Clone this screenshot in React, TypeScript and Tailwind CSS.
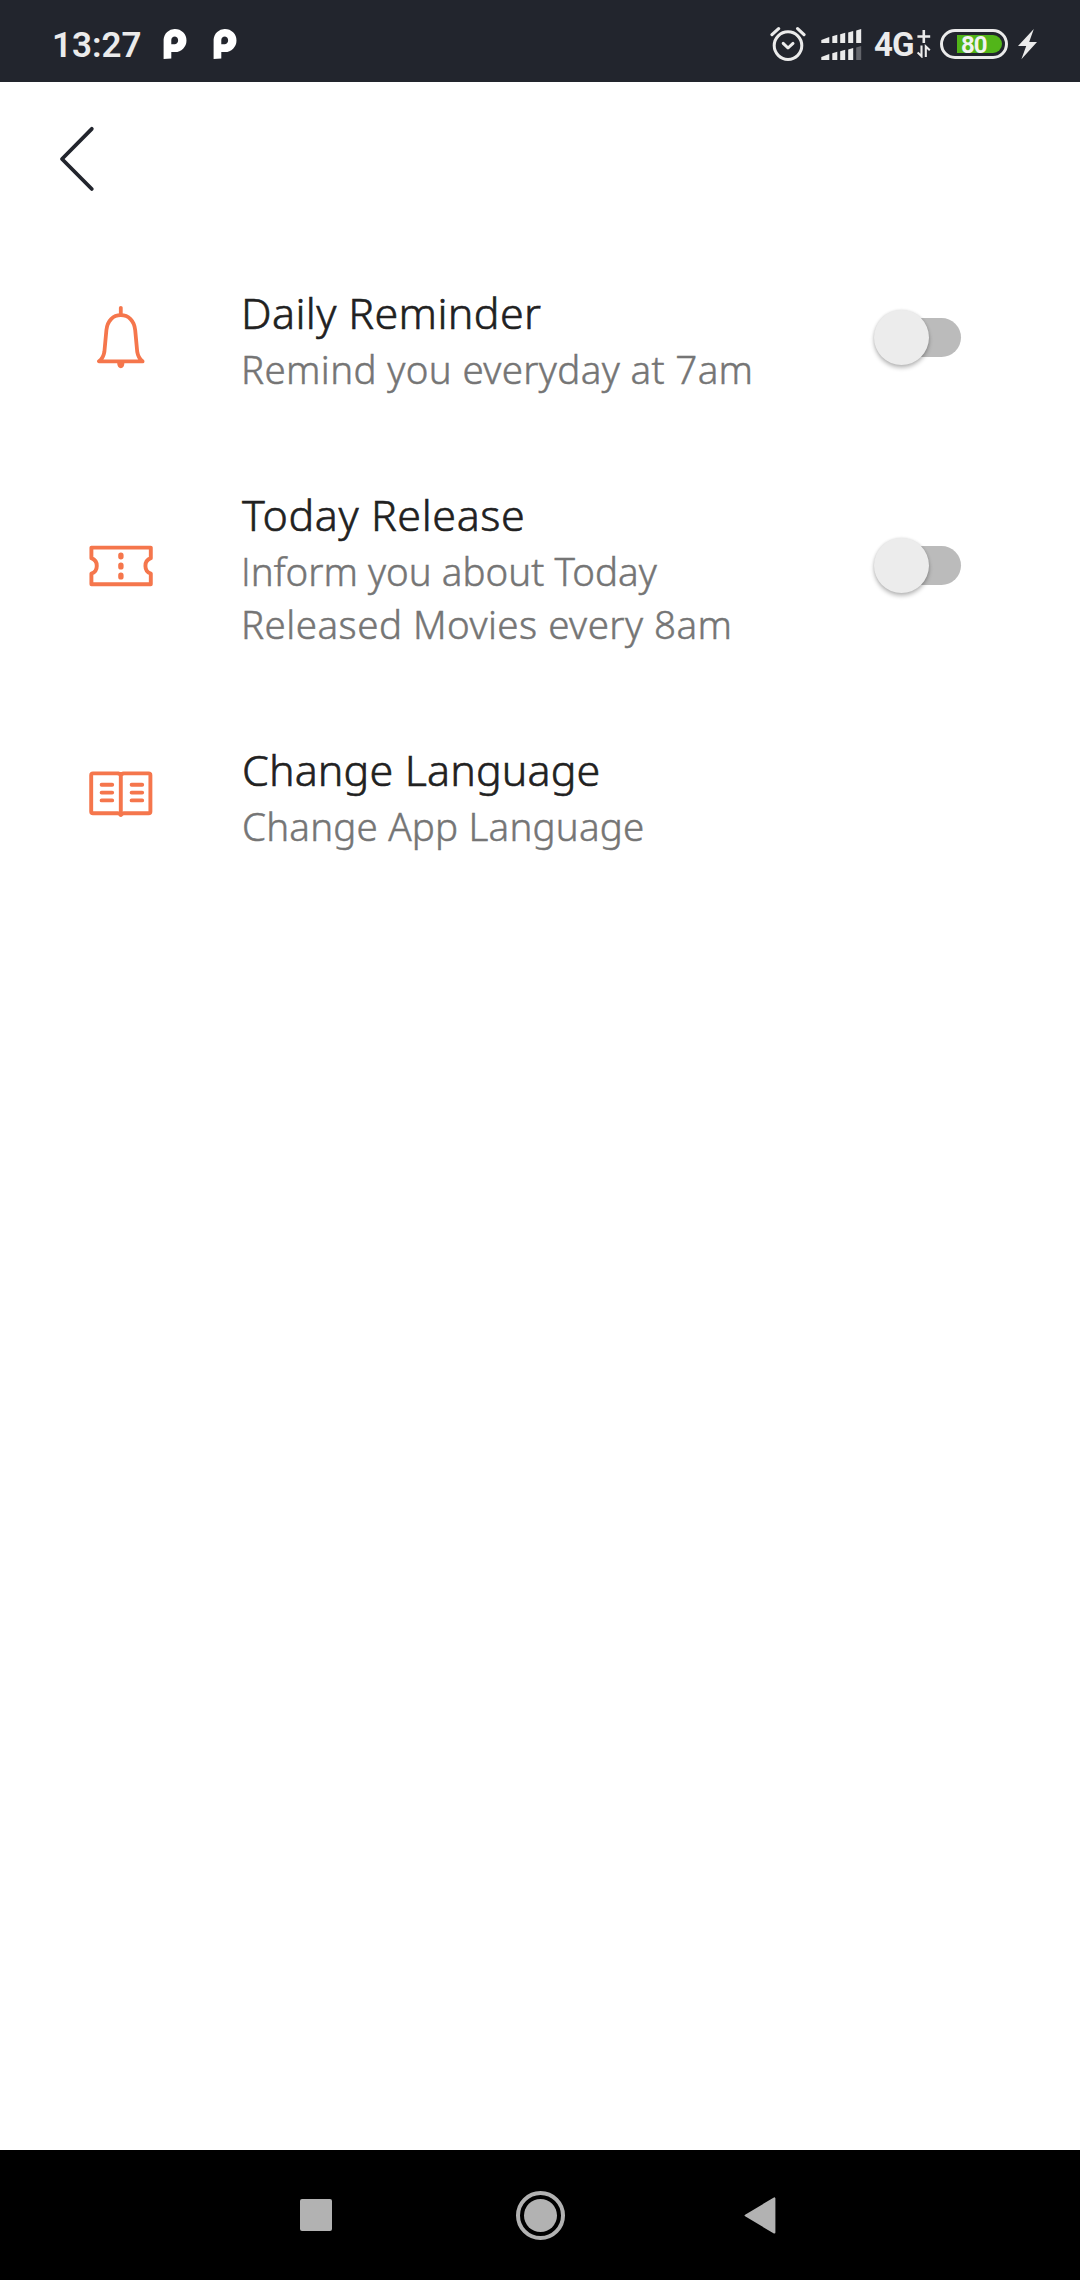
import { useState, type ReactNode } from "react";

const ORANGE = "#f5764c";

function PocketIcon() {
  return (
    <svg width="24" height="30" viewBox="0 0 24 30" fill="none">
      <path
        fillRule="evenodd"
        d="M0.6 30V10.5A11.2 11.2 0 0 1 12 0A11.4 11.4 0 0 1 12 23H8.3V29.4ZM8.3 15.2H12A4 4 0 0 0 12 7.4A3.8 3.8 0 0 0 8.3 11Z"
        fill="#fff"
      />
    </svg>
  );
}

function AlarmIcon() {
  return (
    <svg width="36" height="36" viewBox="0 0 36 36" fill="none" stroke="#ebebeb" strokeLinecap="round">
      <circle cx="18" cy="19.6" r="13.8" strokeWidth="3" />
      <path d="M13.2 17.4L18 22L23 17.4" strokeWidth="3" strokeLinejoin="round" />
      <path d="M2 8.6L8.6 2.6M27.6 2.6L34 8.6" strokeWidth="3.2" />
    </svg>
  );
}

function SignalIcon() {
  return (
    <svg width="42" height="32" viewBox="0 0 42 32" fill="#ebebeb">
      <path d="M0.3 11L8.3 8V14H0.3ZM11.3 7.3L16.3 5.8V14H11.3ZM19.2 5.3L24.2 3.8V14H19.2ZM27.2 3.6L32.2 2V14H27.2ZM35.2 1.6L40.2 0V14H35.2Z" />
      <path d="M0.3 28L8.3 25V31H0.3ZM11.3 24.3L16.3 22.8V31H11.3ZM19.2 22.3L24.2 20.8V31H19.2ZM27.2 20.6L32.2 19V31H27.2Z" />
      <path d="M35.2 18.6L40.2 17V31H35.2Z" fill="#63656b" />
    </svg>
  );
}

function DataIcon() {
  return (
    <svg width="14" height="28" viewBox="0 0 14 28" fill="none" stroke="#ebebeb" strokeWidth="2.6">
      <path d="M6.8 0V13M0.4 6.5H13.2" />
      <path d="M4.5 15.5V26.2L0.6 22.4M8.8 27V16.4L12.8 20.2" strokeWidth="2.1" />
    </svg>
  );
}

function Battery() {
  return (
    <div className="flex h-[30px] w-[68px] items-center rounded-full border-[3px] border-[#ebebeb] pl-[14px]">
      <div className="flex h-[18px] w-[45px] items-center rounded-l-[1px] rounded-r-full bg-[#52b519] pl-1">
        <span className="pt-px font-[Roboto] text-[24px] leading-[18px] font-bold tracking-[-0.9px] text-[#f2f2f2]">80</span>
      </div>
    </div>
  );
}

function BellIcon() {
  return (
    <svg width="48" height="64" viewBox="0 0 48 64" fill="none" stroke={ORANGE} strokeWidth="3.8" strokeLinecap="round" strokeLinejoin="round">
      <path d="M23.8 2.8V9.6" />
      <path d="M2 56.4H45.6C42.5 54.1 41 51.6 40.2 46.6L38.2 25.1C37.2 15.6 31.5 10.2 23.8 10.2S10.4 15.6 9.4 25.1L7.4 46.6C6.6 51.6 5.1 54.1 2 56.4Z" />
      <path d="M20.2 58H27.4C27.4 61 26 63.2 23.8 63.2S20.2 61 20.2 58Z" fill={ORANGE} stroke="none" />
    </svg>
  );
}

function TicketIcon() {
  return (
    <svg width="64" height="42" viewBox="0 0 64 42" fill="none" stroke={ORANGE} strokeWidth="3.9" strokeLinejoin="round">
      <path d="M2.4 2.6H61.8V13.2A8.2 8.2 0 0 0 61.8 28.6V39.2H2.4V28.6A8.2 8.2 0 0 0 2.4 13.2Z" />
      <path d="M31.9 10.2V11.8M31.9 20.1V21.9M31.9 30.3V31.9" strokeWidth="5.4" strokeLinecap="round" />
    </svg>
  );
}

function BookIcon() {
  return (
    <svg width="64" height="46" viewBox="0 0 64 46" fill="none" stroke={ORANGE} strokeWidth="3.9" strokeLinecap="round" strokeLinejoin="round">
      <path d="M4 2.4H29L31.8 3.4L34.6 2.4H59.6Q61.4 2.4 61.4 4.2V40.4Q61.4 42.2 59.6 42.2H34.6L31.8 43.4L29 42.2H4Q2.2 42.2 2.2 40.4V4.2Q2.2 2.4 4 2.4Z" />
      <path d="M31.8 3.4V44" />
      <path d="M12.6 13.8H23.2M12.6 21.6H23.2M12.6 29.4H23.2M42.6 13.8H53.2M42.6 21.6H53.2M42.6 29.4H53.2" />
    </svg>
  );
}

function Toggle({ label }: { label: string }) {
  const [on, setOn] = useState(false);
  return (
    <button
      role="switch"
      aria-checked={on}
      aria-label={label}
      onClick={() => setOn(!on)}
      className={`mr-[119px] ml-auto flex h-[39px] w-[81px] items-center rounded-full bg-[#bbbbbb] ${on ? "justify-end" : "justify-start"}`}
    >
      <span className="-ml-[6px] size-[55px] shrink-0 rounded-full bg-[#ececec] shadow-[0_3px_4px_rgba(0,0,0,0.25),0_0_3px_rgba(0,0,0,0.12)]" />
    </button>
  );
}

function Row({ icon, children, toggle }: { icon: ReactNode; children: ReactNode; toggle?: string }) {
  return (
    <div className="flex items-center">
      <div className="flex w-[241px] shrink-0 justify-center pl-px">{icon}</div>
      <div className="flex flex-col pt-[47px] pb-[42px]">{children}</div>
      {toggle && <Toggle label={toggle} />}
    </div>
  );
}

function Title({ className, children }: { className: string; children: ReactNode }) {
  return (
    <div className={`text-[43px] leading-[60px] text-[#212121] [-webkit-text-stroke:0.6px_#212121] ${className}`}>
      {children}
    </div>
  );
}

function Line({ className, children }: { className: string; children: ReactNode }) {
  return (
    <div className={`text-[38.5px] leading-[53px] text-[#757575] [-webkit-text-stroke:0.5px_#757575] ${className}`}>
      {children}
    </div>
  );
}

export default function App() {
  return (
    <div className="flex h-[2280px] w-[1080px] flex-col bg-white">
      <header className="flex h-[82px] items-start bg-[#22252d] pl-[52px]">
        <span className="mt-[26px] w-[111px] font-[Roboto] text-[35px] leading-[40px] font-semibold text-[#ebebeb]">13:27</span>
        <div className="mt-[29px] flex gap-[26px]">
          <PocketIcon />
          <PocketIcon />
        </div>
        <div className="ml-auto flex items-start pr-[42px]">
          <div className="mt-[26px] mr-[15px]"><AlarmIcon /></div>
          <div className="mt-[29px] mr-[11px]"><SignalIcon /></div>
          <span className="mt-[25px] w-[43px] font-[Roboto] text-[33px] leading-[40px] font-bold tracking-[-1px] text-[#ebebeb]">4G</span>
          <div className="mt-[30px] mr-[9px]"><DataIcon /></div>
          <div className="mt-[29px] mr-[9px]"><Battery /></div>
          <svg className="mt-[29px]" width="21" height="31" viewBox="0 0 21 31" fill="#ebebeb">
            <path d="M16.8 0L1 17H9.2L4.4 30.2L20 13H12.2Z" />
          </svg>
        </div>
      </header>

      <main className="flex-1 font-['Noto_Sans',sans-serif] font-light">
        <button aria-label="Back" className="mt-[42px] ml-[56px] block h-[70px] w-10">
          <svg width="40" height="70" viewBox="0 0 40 70" fill="none" stroke="#22252d" strokeWidth="3.8" strokeLinecap="round" strokeLinejoin="round">
            <path d="M35.8 4.8L6 35L35.8 65" />
          </svg>
        </button>

        <div className="mt-[42px]">
          <Row icon={<BellIcon />} toggle="Daily Reminder">
            <Title className="tracking-[0.38px]">Daily Reminder</Title>
            <Line className="tracking-[0.36px]">Remind you everyday at 7am</Line>
          </Row>
          <Row icon={<TicketIcon />} toggle="Today Release">
            <Title className="pl-px tracking-[0.6px]">Today Release</Title>
            <Line className="tracking-[0.02px]">
              <span className="font-['Open_Sans']">I</span>nform you about Today
            </Line>
            <Line className="tracking-[0.48px]">Released Movies every 8am</Line>
          </Row>
          <Row icon={<BookIcon />}>
            <Title className="pl-px tracking-[0.13px]">Change Language</Title>
            <Line className="pl-px tracking-[0.2px]">Change App Language</Line>
          </Row>
        </div>
      </main>

      <nav className="flex h-[130px] items-center bg-black pl-[300px]">
        <div className="mr-[184px] size-8 rounded-[2px] bg-[#b2b2b2]" />
        <div className="mt-px flex size-[49px] items-center justify-center rounded-full border-4 border-[#b2b2b2]">
          <div className="size-[33px] rounded-full bg-[#b2b2b2]" />
        </div>
        <svg className="mt-px ml-[179px]" width="32" height="37" viewBox="0 0 32 37" fill="#b2b2b2" stroke="#b2b2b2" strokeWidth="2" strokeLinejoin="round">
          <path d="M1.6 18.5L30.4 1.4V35.6Z" />
        </svg>
      </nav>
    </div>
  );
}
